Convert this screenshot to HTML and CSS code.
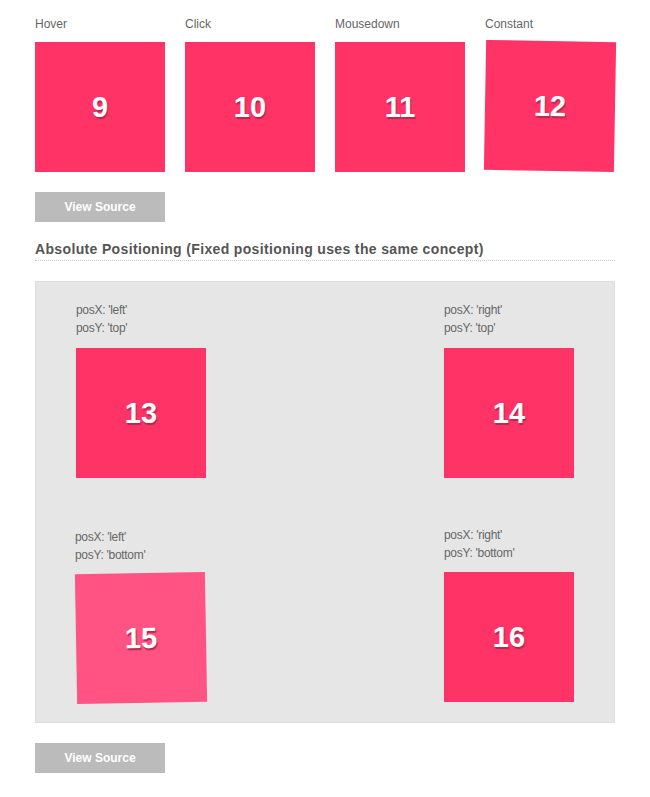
FILE: index.html
```html
<!DOCTYPE html>
<html>
<head>
<meta charset="utf-8">
<link rel="stylesheet" href="styles.css">
</head>
<body>
<div class="page">
  <div class="row">
    <div class="item">
      <div class="label">Hover</div>
      <div class="box">9</div>
    </div>
    <div class="item">
      <div class="label">Click</div>
      <div class="box">10</div>
    </div>
    <div class="item">
      <div class="label">Mousedown</div>
      <div class="box">11</div>
    </div>
    <div class="item">
      <div class="label">Constant</div>
      <div class="box tilt-right">12</div>
    </div>
  </div>
  <div class="btn">View Source</div>

  <h2 class="heading">Absolute Positioning (Fixed positioning uses the same concept)</h2>

  <div class="panel">
    <div class="cell">
      <div class="pos">posX: 'left'<br>posY: 'top'</div>
      <div class="box">13</div>
    </div>
    <div class="cell right">
      <div class="pos">posX: 'right'<br>posY: 'top'</div>
      <div class="box">14</div>
    </div>
    <div class="cell">
      <div class="pos shifted">posX: 'left'<br>posY: 'bottom'</div>
      <div class="box light tilt-left">15</div>
    </div>
    <div class="cell right">
      <div class="pos">posX: 'right'<br>posY: 'bottom'</div>
      <div class="box">16</div>
    </div>
  </div>
  <div class="btn">View Source</div>
</div>
</body>
</html>
```
FILE: styles.css
```css
html, body {
  margin: 0;
  padding: 0;
  background: #fff;
}
body {
  font-family: "Liberation Sans", Arial, sans-serif;
  color: #666;
}
.page {
  width: 580px;
  padding: 15px 35px 0 35px;
}
.row {
  display: flex;
  gap: 20px;
}
.item {
  width: 130px;
}
.label {
  font-size: 12px;
  line-height: 18px;
  color: #666;
  margin-bottom: 9px;
}
.box {
  width: 130px;
  height: 130px;
  background: #ff3366;
  color: #fff;
  font-weight: bold;
  font-size: 29px;
  display: flex;
  align-items: center;
  justify-content: center;
  text-shadow: 1px 2px 1px #b8284e;
}
.box.light {
  background: #ff5384;
}
.tilt-right {
  transform: rotate(1deg) translateY(-1px);
}
.tilt-left {
  transform: rotate(-1deg) translateY(1px);
}
.btn {
  margin-top: 20px;
  width: 130px;
  height: 30px;
  background: #bbbbbb;
  color: #fff;
  font-weight: bold;
  font-size: 12px;
  line-height: 30px;
  text-align: center;
}
.heading {
  margin: 19px 0 0 0;
  font-size: 14px;
  line-height: 16px;
  font-weight: bold;
  color: #555;
  letter-spacing: 0.35px;
  padding-bottom: 3px;
  border-bottom: 1px dotted #ccc;
}
.panel {
  margin-top: 20px;
  background: #e6e6e6;
  border: 1px solid #dcdcdc;
  padding: 19px 40px 20px 40px;
  display: grid;
  grid-template-columns: 1fr 1fr;
  row-gap: 48px;
}
.cell {
  display: flex;
  flex-direction: column;
}
.cell.right {
  align-items: flex-end;
}
.cell.right .pos {
  width: 130px;
}
.pos {
  font-size: 12px;
  line-height: 18px;
  color: #666;
  margin-bottom: 11px;
  letter-spacing: -0.3px;
}
.cell:nth-child(n+3) .pos {
  margin-bottom: 10px;
}
.pos.shifted {
  transform: translate(-1px, 2px);
}
```
